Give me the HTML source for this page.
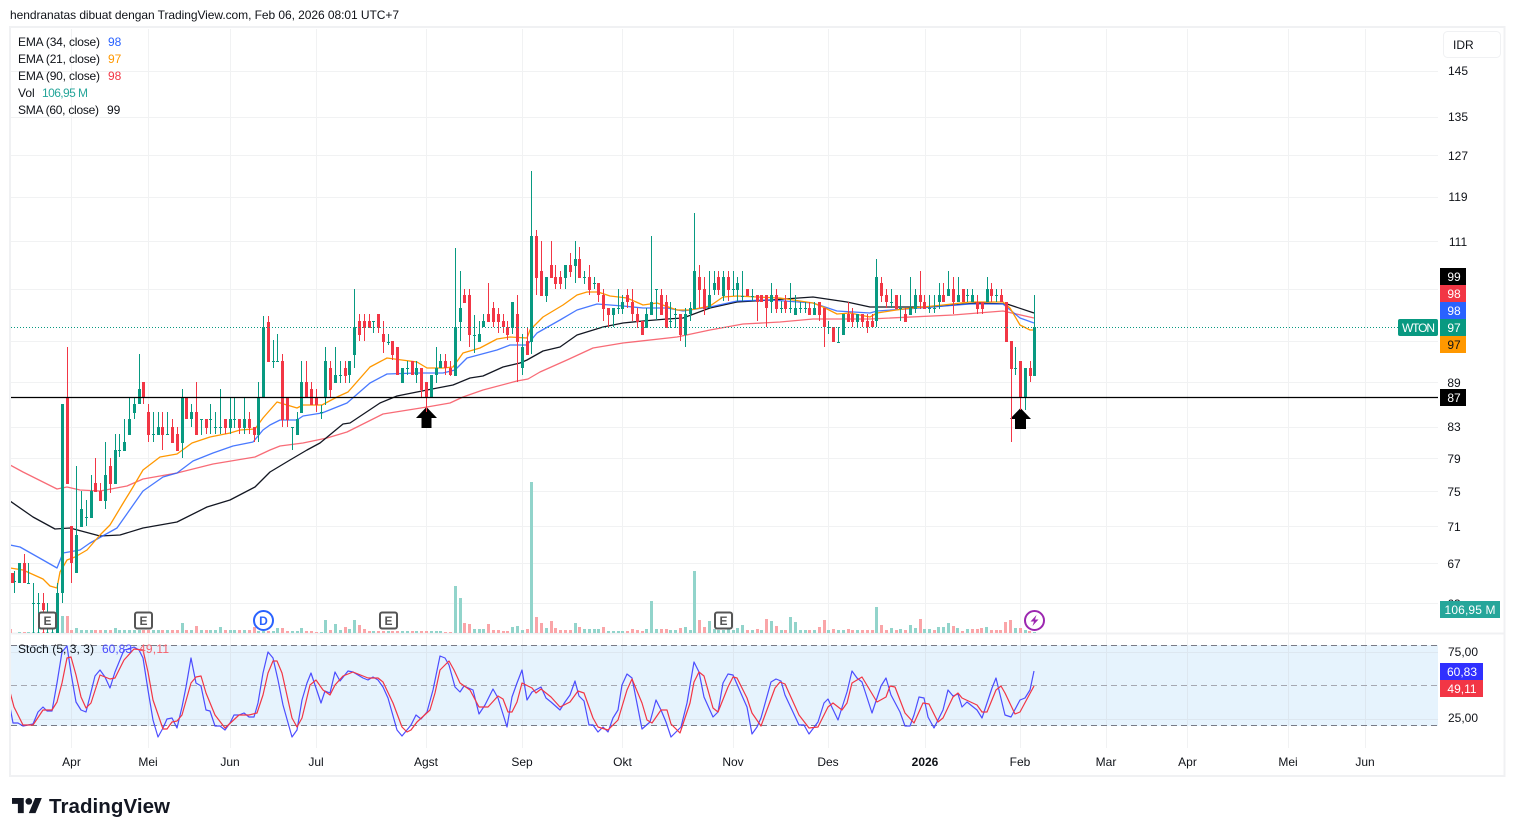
<!DOCTYPE html>
<html><head><meta charset="utf-8"><title>WTON</title>
<style>
html,body{margin:0;padding:0;background:#fff;width:1515px;height:836px;overflow:hidden}
svg{position:absolute;left:0;top:0;display:block}
text{font-family:"Liberation Sans",sans-serif;font-size:12px;fill:#0f1218}
.p{text-anchor:middle}
.w{fill:#fff;text-anchor:middle}
</style></head><body>
<svg width="1515" height="836" viewBox="0 0 1515 836" xmlns="http://www.w3.org/2000/svg">
<defs>
<clipPath id="c1"><rect x="11" y="28" width="1427" height="605"/></clipPath>
<clipPath id="c2"><rect x="11" y="635" width="1427" height="113"/></clipPath>
</defs>
<rect width="1515" height="836" fill="#fff"/>
<text x="10" y="19" textLength="389">hendranatas dibuat dengan TradingView.com, Feb 06, 2026 08:01 UTC+7</text>
<!-- frame -->
<rect x="10" y="27" width="1494.500" height="749" fill="none" stroke="#f0f1f3" stroke-width="2"/>
<path d="M11 633.500H1504" stroke="#f0f1f3" stroke-width="2"/>
<!-- grid -->
<path d="M71.500 29V748M148.500 29V748M230.500 29V748M316.500 29V748M426.500 29V748M522.500 29V748M622.500 29V748M733.500 29V748M828.500 29V748M925.500 29V748M1020.500 29V748M1106.500 29V748M1187.500 29V748M1288.500 29V748M1365.500 29V748" stroke="#f1f2f3" fill="none"/>
<path d="M11 71.500H1438M11 117.500H1438M11 155.500H1438M11 197.500H1438M11 241.500H1438M11 289.500H1438M11 341.500H1438M11 382.500H1438M11 427.500H1438M11 458.500H1438M11 491.500H1438M11 526.500H1438M11 563.500H1438M11 603.500H1438" stroke="#f1f2f3" fill="none"/>
<g clip-path="url(#c1)">
<!-- volume -->
<g transform="translate(.5,0)">
<path fill="none" stroke="#92d4cb" stroke-width="3" d="M19 633v-1M28 633v-1M33 633v-1M38 633v-1M47 633v-1M52 633v-1M57 633v-1M62 633v-17M76 633v-5M81 633v-3M86 633v-3M91 633v-3M105 633v-3M115 633v-5M119 633v-3M124 633v-3M129 633v-3M134 633v-3M139 633v-3M153 633v-3M158 633v-3M167 633v-3M182 633v-10M191 633v-3M201 633v-3M210 633v-3M215 633v-3M220 633v-6M230 633v-3M234 633v-3M244 633v-3M258 633v-2M263 633v-2M273 633v-2M277 633v-5M292 633v-2M297 633v-2M301 633v-5M321 633v-1M325 633v-13M335 633v-9M340 633v-3M349 633v-4M354 633v-13M373 633v-2M388 633v-2M402 633v-2M407 633v-2M416 633v-2M431 633v-2M436 633v-2M440 633v-2M455 633v-47M460 633v-35M474 633v-4M479 633v-4M483 633v-4M512 633v-6M517 633v-7M522 633v-3M531 633v-151M546 633v-5M575 633v-10M584 633v-4M589 633v-4M594 633v-4M598 633v-4M608 633v-2M613 633v-2M618 633v-2M622 633v-2M646 633v-4M651 633v-32M656 633v-4M670 633v-3M675 633v-3M685 633v-6M690 633v-3M694 633v-62M709 633v-12M714 633v-4M718 633v-3M723 633v-3M728 633v-5M733 633v-3M737 633v-5M742 633v-8M752 633v-3M761 633v-3M771 633v-12M781 633v-3M790 633v-16M795 633v-11M800 633v-3M805 633v-3M814 633v-3M828 633v-3M838 633v-3M843 633v-3M857 633v-3M876 633v-26M891 633v-5M900 633v-4M910 633v-8M915 633v-5M924 633v-4M929 633v-4M938 633v-6M943 633v-6M948 633v-10M957 633v-5M967 633v-4M986 633v-6M1015 633v-5M1025 633v-3M1034 633v-1"/>
<path fill="none" stroke="#faa5a8" stroke-width="3" d="M10 633v-4M24 633v-1M43 633v-1M67 633v-17M71 633v-3M95 633v-3M100 633v-3M110 633v-3M143 633v-3M148 633v-3M162 633v-3M172 633v-3M177 633v-3M186 633v-3M196 633v-7M206 633v-3M225 633v-3M239 633v-3M249 633v-3M254 633v-6M268 633v-2M282 633v-5M287 633v-2M306 633v-2M311 633v-2M316 633v-1M330 633v-3M345 633v-6M359 633v-8M364 633v-4M369 633v-2M378 633v-2M383 633v-2M392 633v-2M397 633v-2M412 633v-2M421 633v-2M426 633v-2M445 633v-1M450 633v-1M464 633v-10M469 633v-9M488 633v-9M493 633v-3M498 633v-3M503 633v-2M507 633v-2M527 633v-4M536 633v-16M541 633v-10M551 633v-12M555 633v-5M560 633v-3M565 633v-3M570 633v-3M579 633v-6M603 633v-6M627 633v-2M632 633v-4M637 633v-3M642 633v-2M661 633v-4M666 633v-4M680 633v-5M699 633v-13M704 633v-6M747 633v-3M757 633v-4M766 633v-14M776 633v-7M785 633v-3M809 633v-3M819 633v-6M824 633v-13M833 633v-4M848 633v-4M852 633v-3M862 633v-3M867 633v-3M872 633v-3M881 633v-8M886 633v-3M896 633v-3M905 633v-3M920 633v-14M934 633v-3M953 633v-7M962 633v-2M972 633v-4M977 633v-4M981 633v-5M991 633v-3M996 633v-3M1000 633v-3M1005 633v-11M1010 633v-13M1020 633v-5M1029 633v-2"/>
</g>
<!-- moving averages -->
<g fill="none" stroke-width="1.300" stroke-linejoin="round">
<polyline stroke="#f7525f" stroke-opacity=".85" points="10,465 23,472 43,482 57,489 67,487 80,490 100,491 127,486 143,479 177,473 213,464 255,457 270,450 280,446 303,443 327,438 347,432 383,414 427,407 450,403 463,397 483,390 517,381 528,379 540,372 567,360 593,348 623,343 677,337 710,330 743,324 780,322 813,319 870,319 953,315 1003,311 1034,318"/>
<polyline stroke="#131722" points="10,501 33,517 55,529 70,528 100,536 120,535 143,528 177,522 207,507 230,500 255,487 270,472 290,460 307,450 320,443 343,424 350,423 380,403 397,396 427,390 453,385 470,378 483,376 503,367 520,363 527,360 543,351 560,347 577,335 603,327 623,323 643,321 667,319 683,318 710,308 737,302 770,300 813,297 847,302 870,307 930,307 977,303 1007,304 1034,313"/>
<polyline stroke="#2962ff" stroke-opacity=".85" points="10,545 20,547 43,560 57,568 63,553 80,550 90,543 117,528 143,491 163,477 177,473 193,461 213,453 233,446 253,442 263,430 270,425 280,420 297,420 303,416 322,413 347,403 370,383 387,374 417,373 443,373 455,370 467,358 497,350 510,345 527,345 537,333 560,320 577,310 597,304 623,306 643,308 667,308 683,311 710,307 737,301 770,300 813,303 837,311 870,313 877,311 920,308 970,304 1003,304 1020,318 1034,323"/>
<polyline stroke="#ff9800" points="10,568 23,570 43,579 50,586 57,588 60,572 63,567 67,560 75,557 87,550 100,535 110,525 122,505 133,487 143,470 160,457 177,454 192,443 210,437 230,433 240,430 255,429 263,418 270,410 277,402 297,408 303,405 322,405 337,397 348,392 370,367 387,358 417,362 427,368 443,368 453,367 463,353 480,348 497,339 510,337 527,338 530,330 543,317 563,305 577,295 587,292 598,292 610,296 627,298 643,305 657,303 677,310 690,310 710,306 723,297 737,296 757,297 780,298 813,303 823,307 837,314 850,313 870,317 877,313 903,309 943,305 970,302 1003,302 1010,308 1020,325 1030,330 1034,330"/>
</g>
<!-- arrows -->
<path d="M426.500 407L437 418H431.500V428H421.500V418H416ZM1020.500 408L1031 419H1026V429H1015V419H1010Z" fill="#000"/>
<!-- candles -->
<g transform="translate(.5,0)" fill="none">
<path stroke="#089981" d="M14 571V593M19 563V583M28 563V583M33 583V633M38 593V633M47 603V633M52 612V633M57 583V633M62 404V603M76 466V573M81 491V527M86 500V526M91 475V518M105 442V509M115 434V484M119 434V457M124 419V451M129 397V435M134 397V419M139 354V404M153 412V442M158 412V435M167 412V435M182 389V458M191 404V427M201 419V435M210 404V434M215 412V434M220 389V434M230 397V434M234 397V428M244 397V434M258 382V442M263 316V397M273 340V368M277 334V361M292 427V450M297 412V435M301 361V413M321 405V419M325 347V405M335 347V383M340 361V383M349 361V383M354 289V368M373 321V333M388 334V345M402 368V383M407 361V375M416 361V383M431 375V397M436 347V383M440 354V368M455 248V376M460 271V341M474 315V353M479 321V342M483 314V327M512 302V334M522 334V375M531 171V354M546 277V302M565 265V289M575 241V283M584 271V284M594 277V289M613 308V327M618 289V314M622 295V314M646 308V328M651 236V315M656 289V320M670 302V328M675 308V328M685 308V347M690 302V321M694 213V309M709 271V308M714 271V295M723 271V301M733 271V296M737 277V301M742 271V301M752 289V301M771 283V313M781 301V313M790 283V313M795 295V315M800 302V313M805 302V313M814 302V315M828 321V334M838 327V342M843 314V335M857 314V327M876 259V327M891 289V308M900 295V321M910 277V315M915 289V313M929 295V313M934 295V313M939 283V309M948 271V296M958 277V302M967 289V302M972 289V302M987 277V302M996 289V302M1015 347V375M1025 368V410M1034 295V376"/>
<path stroke="#089981" stroke-width="3" d="M14 581v1M19 563V583M28 583v1M33 603v1M38 603v1M47 622v1M52 628v1M57 593V633M62 404V593M76 535V573M81 509V527M86 517v1M91 491V518M105 475V501M115 450V484M119 450v1M124 442V451M129 419V435M134 404V413M139 389V404M153 434v1M158 427V435M167 434v1M182 397V443M191 412V419M201 419v1M210 419v1M215 427v1M220 427v1M230 419V428M234 419v1M244 419V428M258 397V435M263 327V397M273 361v1M277 361v1M292 427v1M297 419V435M301 382V413M321 412v1M325 361V397M335 375V383M340 375v1M349 361V375M354 327V355M373 321v1M388 342v1M402 368V383M407 368v1M416 368V375M431 375V397M436 368V375M440 361V368M455 327V376M460 308V322M474 335v1M479 334V342M483 321V327M512 302V328M522 347V368M531 236V342M546 277V296M565 265V278M575 259V266M584 277v1M594 283v1M613 308V315M618 308v1M622 302V309M646 314V328M651 302V315M656 289v1M670 321v1M675 314v1M685 314V335M690 308V314M694 271V309M709 295V308M714 283V290M723 277V296M733 289v1M737 283V290M742 296v1M752 296v1M771 295V302M781 308v1M790 308v1M795 308V315M800 308v1M805 308v1M814 308V315M828 327v1M838 342v1M843 314V335M857 314V322M876 277V321M891 302v1M900 308v1M910 308V315M915 295V309M929 308v1M934 308v1M939 295V302M948 289V296M958 295V302M967 295v1M972 295V302M987 289V302M996 295v1M1015 368v1M1025 368V398M1034 327V376"/>
<path stroke="#f23645" d="M24 554V583M43 593V633M67 347V484M71 526V583M95 458V492M100 483V501M110 458V493M143 382V404M148 404V442M162 412V450M172 419V443M177 427V451M186 397V419M196 382V435M206 419V434M225 419V434M239 419V434M249 412V434M254 427V442M268 316V362M282 354V427M287 397V427M306 361V397M311 382V405M316 389V412M330 361V397M345 361V383M359 314V341M364 314V341M369 314V328M378 314V333M383 321V353M392 341V360M397 347V375M412 361V375M421 368V397M426 382V412M445 354V375M450 361V376M464 289V303M469 289V347M488 283V322M493 302V327M498 308V333M503 314V333M507 321V340M517 295V382M527 327V355M536 230V295M541 241V296M551 241V278M555 265V289M560 271V289M570 253V277M579 247V278M589 265V295M598 283V302M603 289V321M608 308V327M627 289V308M632 289V321M637 308V328M642 321V335M661 289V315M666 295V328M680 314V341M699 265V308M704 277V315M718 271V295M728 271V301M747 289V296M757 295V321M761 295V302M766 295V327M776 289V313M785 295V313M809 302V315M819 302V321M824 308V347M833 327V342M848 302V322M852 308V327M862 314V327M867 314V333M872 314V327M881 277V302M886 289V308M896 295V309M905 308V322M920 271V309M924 295V309M943 283V302M953 277V314M963 289V302M977 295V314M982 302V314M991 283V302M1001 289V302M1006 302V342M1011 341V442M1020 361V410M1030 361V382"/>
<path stroke="#f23645" stroke-width="3" d="M12 573V583M24 563V583M43 603V610M67 397V484M71 526V563M95 483V492M100 491V501M110 466V484M143 382V397M148 412V435M162 427V435M172 427V443M177 434V451M186 397V419M196 412V435M206 419V428M225 419V428M239 419V428M249 419V428M254 427V435M268 322V362M282 361V420M287 397V420M306 382V397M311 389V405M316 397V405M330 368V390M345 368V376M359 321V335M364 321V328M369 321V328M378 314V328M383 334V342M392 341V355M397 347V375M412 361V375M421 368V390M426 382V397M445 361V368M450 368V375M464 295V303M469 295V335M488 314V322M493 308V322M498 314V322M503 321V327M507 327V335M517 314V342M527 341V355M536 236V278M541 271V296M551 265V278M555 277V284M560 277V284M570 265V272M579 259V278M589 277V290M598 283V295M603 295V309M608 308V315M627 295V302M632 302V314M637 314V322M642 321V335M661 295V315M666 302V328M680 314V335M699 277V290M704 289V309M718 277V290M728 277V290M747 289V296M757 295V302M761 295V302M766 295V308M776 295V309M785 301V309M809 308V315M819 302V315M824 308V327M833 327V342M848 314V322M852 314V322M862 314V322M867 321V327M872 321V327M881 283V296M886 295V302M896 295V309M905 314V322M920 295V302M924 302V309M943 295V302M953 289V302M963 289V302M977 302V309M982 302V309M991 289V296M1001 295V302M1006 302V342M1011 341V369M1020 361V398M1030 368V376"/>
</g>
</g>
<!-- lines -->
<path d="M11 327.500H1398" stroke="#089981" stroke-dasharray="1 2" fill="none"/>
<path d="M11 397.500H1438" stroke="#000" stroke-width="1.300" fill="none"/>
<!-- stoch -->
<rect x="11" y="645" width="1427" height="81" fill="#e6f3fd"/>
<path d="M71.500 645V726M148.500 645V726M230.500 645V726M316.500 645V726M426.500 645V726M522.500 645V726M622.500 645V726M733.500 645V726M828.500 645V726M925.500 645V726M1020.500 645V726M1106.500 645V726M1187.500 645V726M1288.500 645V726M1365.500 645V726M11 652.500H1438M11 719.500H1438" stroke="#dde7f0" fill="none"/>
<path d="M11 645.500H1438M11 725.500H1438" stroke="#787b86" stroke-dasharray="6 4" fill="none"/>
<path d="M11 685.500H1438" stroke="#a5a8b2" stroke-dasharray="6 4" fill="none"/>
<g clip-path="url(#c2)" fill="none" stroke-width="1.200" stroke-linejoin="round">
<polyline stroke="#3b3bff" stroke-opacity=".9" points="10,707 13,723 18,723 23,726 33,724 38,712 43,707 47,711 52,711 57,683 62,652 67,646 71,673 76,702 81,710 86,712 95,676 100,670 105,677 110,688 115,672 124,650 129,649 134,647 139,650 143,658 148,690 153,720 158,737 163,728 167,719 172,718 177,728 182,707 186,687 191,658 196,683 201,686 206,710 210,711 215,726 220,726 225,730 230,723 234,715 239,715 244,713 249,717 254,717 258,703 263,673 268,652 273,658 278,680 283,705 292,737 297,730 302,700 307,683 311,673 321,703 325,691 330,693 335,672 340,681 348,671 353,672 363,678 368,680 373,677 378,680 383,687 388,698 397,730 402,736 411,725 416,715 421,719 427,712 433,690 440,656 445,658 449,665 455,687 460,692 464,686 473,690 479,714 485,705 493,689 498,698 507,727 512,697 517,683 522,670 527,700 532,692 541,687 546,698 551,702 560,710 565,702 570,695 575,681 579,696 584,701 589,725 593,725 598,732 603,727 608,732 613,718 618,710 622,685 627,674 632,678 642,729 650,722 656,700 661,710 666,722 671,737 677,731 681,727 687,703 694,662 699,672 704,697 713,717 718,712 723,683 728,674 733,675 743,698 747,707 752,734 757,727 761,718 771,682 776,679 781,681 785,695 799,725 804,725 809,734 818,722 824,703 828,699 838,720 847,692 852,671 857,678 862,682 872,713 881,686 886,678 891,695 900,712 905,726 910,726 914,715 919,697 924,698 928,717 934,728 943,710 948,690 953,696 958,694 962,707 967,702 977,710 982,718 992,688 996,678 1005,715 1011,717 1020,700 1025,698 1030,690 1034,671"/>
<polyline stroke="#f23645" points="10,692 14,707 23,725 33,725 43,710 52,710 57,702 62,683 67,658 71,657 76,675 81,697 86,708 91,703 100,675 110,679 115,678 124,660 134,649 143,650 148,672 153,700 163,729 167,729 172,722 177,721 182,715 191,683 196,677 201,676 206,693 215,715 225,728 239,715 249,715 257,713 263,695 268,673 273,661 277,661 282,673 292,718 297,727 302,718 310,685 316,680 323,690 330,695 335,685 343,676 353,672 368,678 378,678 383,682 393,703 402,727 407,732 411,730 417,722 430,710 435,693 440,670 449,661 454,670 460,683 470,690 479,707 488,707 498,696 503,699 508,712 512,712 517,702 522,683 532,688 536,693 541,689 551,697 560,707 570,702 578,691 584,693 593,718 598,727 608,730 618,720 627,690 632,679 642,703 647,720 652,723 661,710 667,710 671,724 680,733 690,703 694,682 699,672 704,676 713,708 718,712 728,687 733,677 737,678 747,698 752,713 761,726 775,688 780,682 785,684 799,715 809,728 818,727 828,707 833,703 842,710 847,703 852,683 862,677 877,702 886,697 890,686 895,687 905,713 914,723 923,703 929,704 938,722 943,718 953,697 958,693 962,698 977,705 982,712 987,712 996,690 1001,686 1005,693 1015,714 1020,712 1034,686"/>
</g>
<!-- legend -->
<g>
<text x="18" y="46" textLength="82">EMA (34, close)</text><text x="108" y="46" style="fill:#2962ff">98</text>
<text x="18" y="63" textLength="82">EMA (21, close)</text><text x="108" y="63" style="fill:#ff9800">97</text>
<text x="18" y="80" textLength="82">EMA (90, close)</text><text x="108" y="80" style="fill:#f23645">98</text>
<text x="18" y="97">Vol</text><text x="42" y="97" textLength="46" style="fill:#26a69a">106,95 M</text>
<text x="18" y="114" textLength="81">SMA (60, close)</text><text x="107" y="114">99</text>
<text x="18" y="653" textLength="76">Stoch (5, 3, 3)</text><text x="102" y="653" textLength="30" style="fill:#4a4aff">60,83</text><text x="139" y="653" textLength="30" style="fill:#f5606c">49,11</text>
</g>
<!-- badges -->
<g fill="#fff" stroke="#555" stroke-width="2">
<rect x="39" y="612.500" width="17" height="16" rx="2"/>
<rect x="135" y="612.500" width="17" height="16" rx="2"/>
<rect x="380" y="612.500" width="17" height="16" rx="2"/>
<rect x="715" y="612.500" width="17" height="16" rx="2"/>
</g>
<g style="font-weight:bold">
<text class="p" x="47.500" y="625" style="fill:#555">E</text>
<text class="p" x="143.500" y="625" style="fill:#555">E</text>
<text class="p" x="388.500" y="625" style="fill:#555">E</text>
<text class="p" x="723.500" y="625" style="fill:#555">E</text>
</g>
<circle cx="263.500" cy="620.500" r="9.500" fill="#fff" stroke="#2962ff" stroke-width="2"/>
<text class="p" x="263.500" y="625" style="fill:#2962ff;font-weight:bold">D</text>
<circle cx="1034.500" cy="620.500" r="9.500" fill="#fff" stroke="#9c27b0" stroke-width="2"/>
<path d="M1036.500 615L1030.500 621.500H1034L1032.500 626L1038.500 619.500H1035Z" fill="#9c27b0"/>
<!-- price scale -->
<rect x="1443.500" y="31.500" width="57" height="26" rx="4" fill="#fff" stroke="#f0f1f3"/>
<text x="1453" y="49">IDR</text>
<g>
<text class="p" x="1458" y="75">145</text>
<text class="p" x="1458" y="121">135</text>
<text class="p" x="1458" y="160">127</text>
<text class="p" x="1458" y="201">119</text>
<text class="p" x="1458" y="246">111</text>
<text class="p" x="1454" y="387">89</text>
<text class="p" x="1454" y="431">83</text>
<text class="p" x="1454" y="463">79</text>
<text class="p" x="1454" y="496">75</text>
<text class="p" x="1454" y="531">71</text>
<text class="p" x="1454" y="568">67</text>
<text class="p" x="1454" y="608">63</text>
<text class="p" x="1463" y="656">75,00</text>
<text class="p" x="1463" y="722">25,00</text>
</g>
<rect x="1440" y="268" width="26" height="17" fill="#000"/>
<rect x="1440" y="285" width="26" height="17" fill="#f23645"/>
<rect x="1440" y="302" width="26" height="17" fill="#2962ff"/>
<rect x="1440" y="319" width="26" height="17" fill="#089981"/>
<rect x="1440" y="336" width="26" height="17" fill="#ff9800"/>
<rect x="1398" y="319" width="40" height="17" rx="2" fill="#089981"/>
<rect x="1440" y="389" width="26" height="17" fill="#000"/>
<rect x="1440" y="601" width="60" height="17" fill="#26a69a"/>
<rect x="1440" y="663" width="43" height="17" fill="#3030ff"/>
<rect x="1440" y="680" width="43" height="17" fill="#f23645"/>
<text class="w" x="1454" y="281">99</text>
<text class="w" x="1454" y="298">98</text>
<text class="w" x="1454" y="315">98</text>
<text class="w" x="1454" y="332">97</text>
<text class="p" x="1454" y="349">97</text>
<text class="w" x="1418.500" y="332" textLength="33">WTON</text>
<text class="w" x="1454" y="402">87</text>
<text class="w" x="1470" y="614" textLength="51">106,95 M</text>
<text class="w" x="1462" y="676">60,83</text>
<text class="w" x="1462" y="693">49,11</text>
<!-- time axis -->
<g>
<text class="p" x="71.500" y="766">Apr</text>
<text class="p" x="148" y="766">Mei</text>
<text class="p" x="230" y="766">Jun</text>
<text class="p" x="316" y="766">Jul</text>
<text class="p" x="426" y="766">Agst</text>
<text class="p" x="522" y="766">Sep</text>
<text class="p" x="622.500" y="766">Okt</text>
<text class="p" x="733" y="766">Nov</text>
<text class="p" x="828" y="766">Des</text>
<text class="p" x="925" y="766" style="font-weight:bold">2026</text>
<text class="p" x="1020" y="766">Feb</text>
<text class="p" x="1106" y="766">Mar</text>
<text class="p" x="1187.500" y="766">Apr</text>
<text class="p" x="1288" y="766">Mei</text>
<text class="p" x="1365" y="766">Jun</text>
</g>
<!-- logo -->
<g transform="translate(12,794.600) scale(.84)" fill="#131722">
<path d="M14 22H7V11H0V4h14v18zM28 22h-8l7.500-18h8L28 22z"/><circle cx="20" cy="8" r="4"/>
</g>
<text x="49" y="813" textLength="121" style="font-size:20.500px;font-weight:bold;fill:#131722">TradingView</text>
</svg>
</body></html>
